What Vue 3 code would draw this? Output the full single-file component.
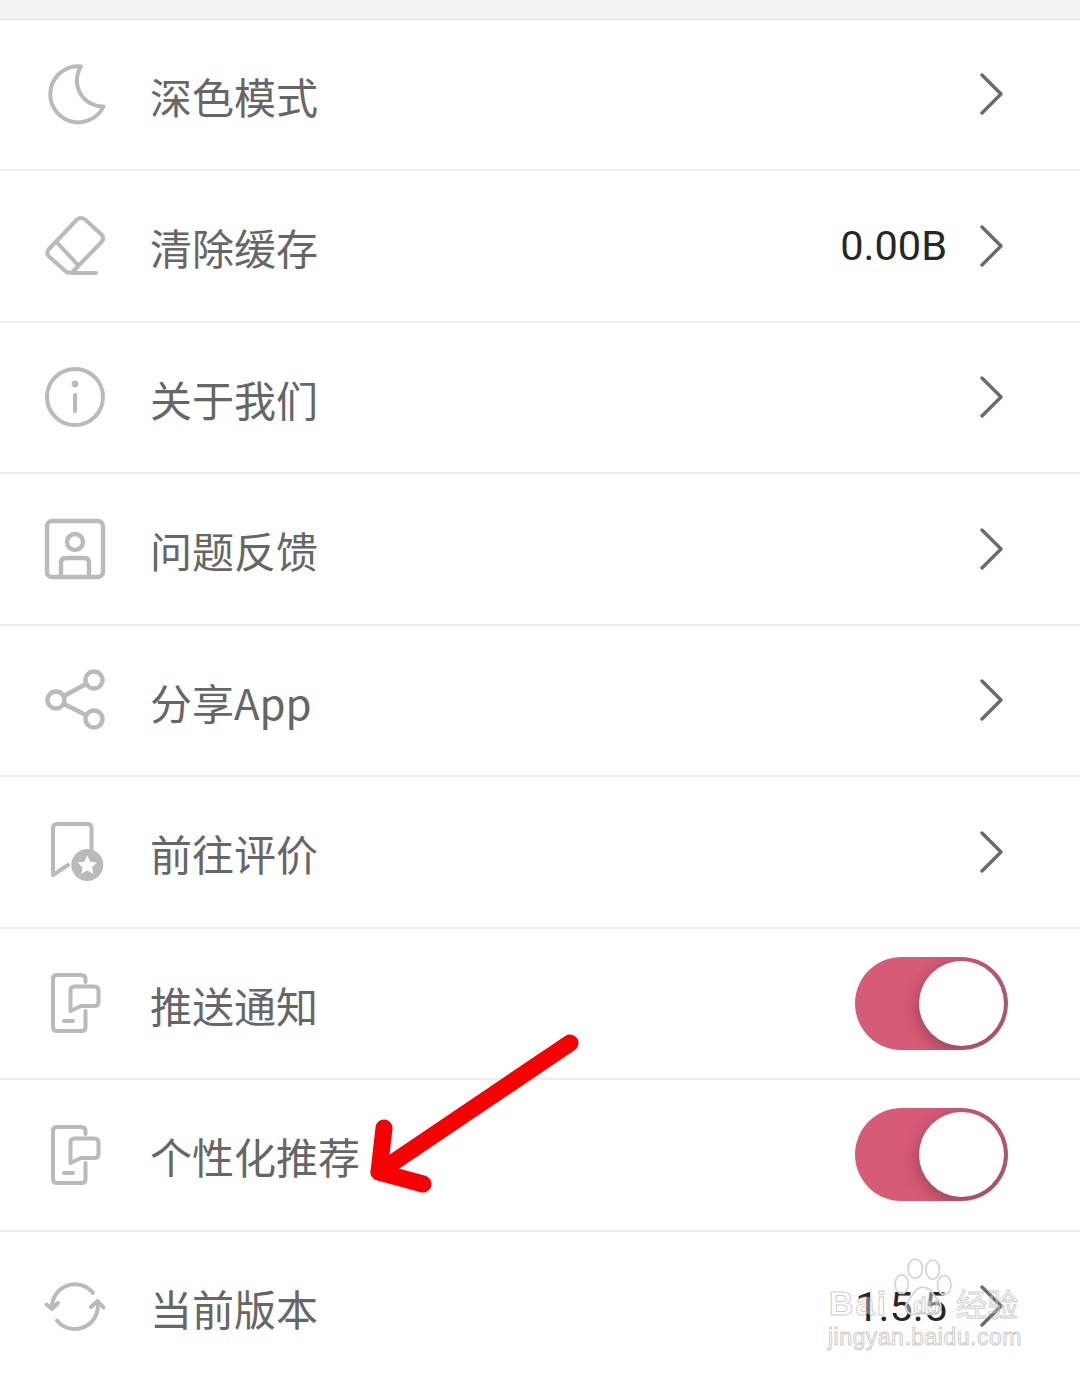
<template>
  <div class="page">
    <div class="top-strip"></div>

    <div v-for="row in rows" :key="row.label" class="row">
      <svg class="icon" viewBox="0 0 60 60" fill="none" stroke="#bababa" stroke-width="4" stroke-linecap="round" stroke-linejoin="round">
        <template v-if="row.icon === 'moon'">
          <path d="M36 2.500A28 28 0 1 0 58.500 42.500A26 26 0 0 1 36 2.500Z" />
        </template>
        <template v-else-if="row.icon === 'eraser'">
          <path d="M32 3.500Q36 0.500 40 3.500L56.500 18.500Q60 22 56.500 26L27 56.500H22L4 40.500Q0.500 37 4 33Z" />
          <path d="M11 25.500L33 49" />
          <path d="M27 57H51" />
        </template>
        <template v-else-if="row.icon === 'info'">
          <circle cx="30" cy="30" r="28" />
          <circle cx="30" cy="17" r="1.400" fill="#bababa" />
          <path d="M30 28V44" />
        </template>
        <template v-else-if="row.icon === 'user'">
          <rect x="2" y="2" width="56" height="56" rx="5" stroke-width="4.400" />
          <circle cx="30" cy="23" r="8" stroke-width="4.400" />
          <path d="M16 56V44Q16 39 21 39H39Q44 39 44 44V56" stroke-width="4.400" />
        </template>
        <template v-else-if="row.icon === 'share'">
          <circle cx="49" cy="10" r="8.500" stroke-width="4.400" />
          <circle cx="11" cy="30" r="8.500" stroke-width="4.400" />
          <circle cx="49" cy="49" r="8.500" stroke-width="4.400" />
          <path d="M19 26L41 14M19 34L41 45" stroke-width="4.400" />
        </template>
        <template v-else-if="row.icon === 'review'">
          <path d="M46.500 28V6Q46.500 2 42.500 2H12Q8 2 8 6V53L23 43" />
          <circle cx="42.300" cy="43" r="16" fill="#bababa" stroke="none" />
          <path d="M42.300 33.500L45.300 39.700L52 40.600L47.100 45.200L48.300 51.800L42.300 48.600L36.300 51.800L37.500 45.200L32.600 40.600L39.300 39.700Z" fill="#fff" stroke="none" />
        </template>
        <template v-else-if="row.icon === 'phone'">
          <path d="M40.500 9V6Q40.500 2 36.500 2H12Q8 2 8 6V54Q8 58 12 58H36.500Q40.500 58 40.500 54V38" />
          <path d="M25.500 38V17.500Q25.500 13.500 29.500 13.500H49Q53.500 13.500 53.500 18V29Q53.500 33 49 33H36Z" />
          <path d="M19 48H28" />
        </template>
        <template v-else-if="row.icon === 'sync'">
          <path d="M7 32A23 23 0 0 1 48 17" />
          <path d="M1.500 28.500L7 33L13 27" />
          <path d="M12 44.500A23 23 0 0 0 52.500 26" />
          <path d="M46 31L52.500 25L58.500 31.500" />
        </template>
      </svg>

      <span class="label">{{ row.label }}</span>

      <span v-if="row.value" class="value">{{ row.value }}</span>

      <div v-if="row.toggle" class="switch">
        <div class="knob"></div>
      </div>
      <svg v-else class="chevron" viewBox="0 0 24 44" fill="none" stroke="#6a6a6a" stroke-width="3.400" stroke-linecap="round" stroke-linejoin="round">
        <path d="M3 3L22 22L3 41" />
      </svg>
    </div>

    <!-- red annotation arrow painted on the screenshot -->
    <svg class="arrow" viewBox="0 0 230 170" fill="none" stroke="#f60000" stroke-width="17" stroke-linecap="round" stroke-linejoin="round">
      <path d="M210 13L19 142" />
      <path d="M24 98L19 142L63 154" />
    </svg>

    <div class="watermark">
      <svg class="paw" viewBox="0 0 60 64" fill="#fff" fill-opacity="0.4" stroke="#d4d4d4" stroke-width="1.800">
        <ellipse cx="8" cy="27" rx="7" ry="9.500" />
        <ellipse cx="22" cy="11" rx="7.500" ry="10" />
        <ellipse cx="40" cy="12" rx="7" ry="10" />
        <ellipse cx="52" cy="28" rx="7" ry="10" />
        <path d="M30 30C38 30 40 38 46 44C52 52 46 60 36 58C32 57 28 57 24 58C14 60 8 52 15 44C20 38 22 30 30 30Z" />
      </svg>
      <div class="wm-brand">
        <span class="wm-bai">Bai</span>
        <span class="wm-du">du</span>
        <span class="wm-jy">经验</span>
      </div>
      <div class="wm-url">jingyan.baidu.com</div>
    </div>
  </div>
</template>

<script setup>
const rows = [
  { label: "深色模式", icon: "moon" },
  { label: "清除缓存", icon: "eraser", value: "0.00B" },
  { label: "关于我们", icon: "info" },
  { label: "问题反馈", icon: "user" },
  { label: "分享App", icon: "share" },
  { label: "前往评价", icon: "review" },
  { label: "推送通知", icon: "phone", toggle: true },
  { label: "个性化推荐", icon: "phone", toggle: true },
  { label: "当前版本", icon: "sync", value: "1.5.5" },
];
</script>

<style>
html,
body {
  margin: 0;
  background: #fff;
}
</style>

<style scoped>
.page {
  position: relative;
  width: 1080px;
  height: 1374px;
  overflow: hidden;
  background: #fff;
  font-family: Roboto, "Noto Sans CJK SC", sans-serif;
}

.top-strip {
  height: 18.500px;
  background: #f2f2f2;
  border-bottom: 1px solid #e6e6e6;
}

.row {
  display: flex;
  align-items: center;
  box-sizing: border-box;
  height: 151.500px;
  padding: 0 72px 0 45px;
  border-bottom: 2px solid #ededed;
}

.row:last-of-type {
  border-bottom: none;
}

.icon {
  flex: none;
  width: 60px;
  height: 60px;
  overflow: visible;
}

.label {
  flex: 1;
  margin-left: 45px;
  padding-top: 3px;
  font-family: "Noto Sans CJK SC", sans-serif;
  font-size: 42px;
  line-height: 50px;
  color: #666;
}

.value {
  margin-right: 32px;
  padding-top: 1px;
  font-size: 41.500px;
  line-height: 50px;
  color: #262626;
}

.chevron {
  flex: none;
  width: 24px;
  height: 44px;
  margin-right: 5px;
}

.switch {
  display: flex;
  justify-content: flex-end;
  align-items: center;
  box-sizing: border-box;
  width: 153px;
  height: 93px;
  padding-right: 4px;
  border-radius: 47px;
  overflow: hidden;
  background: linear-gradient(90deg, #d65b77 0%, #d65b77 45%, #b65a73 100%);
}

.knob {
  width: 85px;
  height: 85px;
  border-radius: 50%;
  background: #fff;
  box-shadow: -3px 4px 14px rgba(70, 20, 35, 0.3);
}

.arrow {
  position: absolute;
  left: 360px;
  top: 1030px;
  width: 230px;
  height: 170px;
}

.watermark {
  position: absolute;
  left: 826px;
  top: 1256px;
  width: 200px;
  height: 100px;
  color: rgba(255, 255, 255, 0.35);
  -webkit-text-stroke: 1px rgba(170, 170, 170, 0.6);
  font-family: "Liberation Sans", sans-serif;
}

.paw {
  position: absolute;
  left: 68px;
  top: 2px;
  width: 58px;
  height: 62px;
}

.wm-brand {
  position: absolute;
  left: 3px;
  top: 30px;
  width: 194px;
  height: 34px;
}

.wm-bai {
  position: absolute;
  left: 0;
  top: 0;
  font-size: 34px;
  font-weight: 700;
  letter-spacing: 2px;
  line-height: 34px;
}

.wm-du {
  position: absolute;
  left: 84px;
  top: 8px;
  font-size: 22px;
  font-weight: 700;
  line-height: 24px;
}

.wm-jy {
  position: absolute;
  left: 127px;
  top: 0;
  font-family: "Noto Sans CJK SC", sans-serif;
  font-size: 31px;
  line-height: 34px;
}

.wm-url {
  position: absolute;
  left: 2px;
  top: 66px;
  font-size: 23px;
  letter-spacing: 0.500px;
  line-height: 30px;
  white-space: nowrap;
}
</style>
